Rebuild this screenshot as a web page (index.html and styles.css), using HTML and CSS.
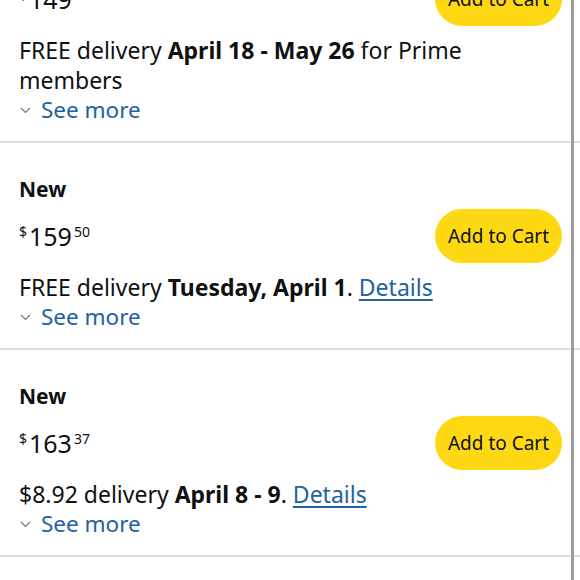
FILE: index.html
```html
<!DOCTYPE html>
<html>
<head>
<meta charset="utf-8">
<link rel="stylesheet" href="styles.css">
</head>
<body>
<div class="list">
  <section class="offer">
    <div class="cond">New</div>
    <div class="price-row">
      <div class="price"><span class="sym">$</span><span class="whole">149</span><span class="frac">00</span></div>
      <button class="cart">Add to Cart</button>
    </div>
    <p class="delivery">FREE delivery <b>April 18 - May 26</b> for Prime members</p>
    <div class="more"><svg class="chev" width="11" height="7" viewBox="0 0 11 7"><path d="M1 1 L5.5 5.5 L10 1" fill="none" stroke="#777" stroke-width="1.2"/></svg><span>See more</span></div>
  </section>
  <section class="offer">
    <div class="cond">New</div>
    <div class="price-row">
      <div class="price"><span class="sym">$</span><span class="whole">159</span><span class="frac">50</span></div>
      <button class="cart">Add to Cart</button>
    </div>
    <p class="delivery">FREE delivery <b>Tuesday, April 1</b>. <a class="link" href="#">Details</a></p>
    <div class="more"><svg class="chev" width="11" height="7" viewBox="0 0 11 7"><path d="M1 1 L5.5 5.5 L10 1" fill="none" stroke="#777" stroke-width="1.2"/></svg><span>See more</span></div>
  </section>
  <section class="offer">
    <div class="cond">New</div>
    <div class="price-row">
      <div class="price"><span class="sym">$</span><span class="whole">163</span><span class="frac">37</span></div>
      <button class="cart">Add to Cart</button>
    </div>
    <p class="delivery">$8.92 delivery <b>April 8 - 9</b>. <a class="link" href="#">Details</a></p>
    <div class="more"><svg class="chev" width="11" height="7" viewBox="0 0 11 7"><path d="M1 1 L5.5 5.5 L10 1" fill="none" stroke="#777" stroke-width="1.2"/></svg><span>See more</span></div>
  </section>
</div>
<div class="scrollbar"></div>
</body>
</html>
```

FILE: styles.css
```css
html, body {
  margin: 0;
  padding: 0;
  background: #fff;
}
body {
  font-family: "Noto Sans", "Liberation Sans", sans-serif;
  color: #0f1111;
  overflow: hidden;
  height: 580px;
}
.list {
  margin-top: -94px;
}
.offer {
  padding: 31px 17px 17px 19px;
  border-bottom: 2px solid #dddddd;
}
.cond {
  font-size: 21px;
  font-weight: 700;
  line-height: 30px;
}
.price-row {
  display: flex;
  justify-content: space-between;
  align-items: center;
  margin-top: 5px;
  height: 54px;
}
.price {
  display: flex;
  align-items: flex-start;
  line-height: 1;
}
.sym {
  font-size: 14px;
  margin-top: 1px;
  margin-right: 2px;
}
.whole {
  font-size: 25px;
}
.frac {
  font-size: 14px;
  margin-top: 1px;
  margin-left: 2px;
}
.cart {
  width: 127px;
  height: 54px;
  border: none;
  border-radius: 27px;
  background: #ffd814;
  color: #0f1111;
  font-family: inherit;
  font-size: 19px;
  padding: 0;
  margin-right: 1px;
}
.delivery {
  margin: 9px 0 0 0;
  font-size: 23px;
  line-height: 30px;
  padding-right: 70px;
}
.delivery b {
  font-weight: 700;
}
.link {
  color: #2162a1;
  text-decoration: underline;
  text-underline-offset: 3px;
}
.more {
  display: flex;
  align-items: center;
  font-size: 22.5px;
  line-height: 30px;
  height: 29px;
  margin-top: 0;
  color: #2162a1;
}
.chev {
  margin-left: 1px;
  margin-right: 10px;
  margin-top: 1px;
}
.scrollbar {
  position: fixed;
  top: 0;
  left: 571px;
  width: 3px;
  height: 580px;
  background: #9b9b9b;
}
```
